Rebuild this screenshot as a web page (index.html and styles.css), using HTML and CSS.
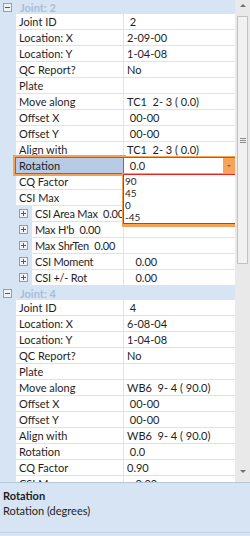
FILE: index.html
```html
<!DOCTYPE html>
<html lang="en">
<head>
  <meta charset="UTF-8">
  <title>Properties</title>
  <link rel="stylesheet" href="styles.css">
</head>
<body>

<div class="top">
  <!-- Property grid -->
  <div class="grid">

    <div class="cat"><span class="toggle minus"></span>Joint: 2</div>
    <div class="row"><div class="name">Joint ID</div><div class="val">&nbsp;2</div></div>
    <div class="row"><div class="name">Location: X</div><div class="val">2-09-00</div></div>
    <div class="row"><div class="name">Location: Y</div><div class="val">1-04-08</div></div>
    <div class="row"><div class="name">QC Report?</div><div class="val">No</div></div>
    <div class="row"><div class="name">Plate</div><div class="val"></div></div>
    <div class="row"><div class="name">Move along</div><div class="val">TC1&nbsp; 2- 3 ( 0.0)</div></div>
    <div class="row"><div class="name">Offset X</div><div class="val">&nbsp;00-00</div></div>
    <div class="row"><div class="name">Offset Y</div><div class="val">&nbsp;00-00</div></div>
    <div class="row"><div class="name">Align with</div><div class="val">TC1&nbsp; 2- 3 ( 0.0)</div></div>
    <div class="row active">
      <div class="name">Rotation</div>
      <div class="val edit">
        &nbsp;0.0
        <span class="drop-btn"></span>
        <!-- open dropdown covers the rows below -->
        <div class="drop-list">
          <div>90</div>
          <div>45</div>
          <div>0</div>
          <div>-45</div>
        </div>
      </div>
    </div>
    <div class="row"><div class="name">CQ Factor</div><div class="val"></div></div>
    <div class="row"><div class="name">CSI Max</div><div class="val"></div></div>
    <div class="row sub"><span class="toggle plus"></span><div class="name">CSI Area Max&nbsp; 0.00</div><div class="val"></div></div>
    <div class="row sub"><span class="toggle plus"></span><div class="name">Max H'b&nbsp; 0.00</div><div class="val"></div></div>
    <div class="row sub"><span class="toggle plus"></span><div class="name">Max ShrTen&nbsp; 0.00</div><div class="val"></div></div>
    <div class="row sub"><span class="toggle plus"></span><div class="name">CSI Moment</div><div class="val">&nbsp;&nbsp; 0.00</div></div>
    <div class="row sub"><span class="toggle plus"></span><div class="name">CSI +/- Rot</div><div class="val">&nbsp;&nbsp; 0.00</div></div>

    <div class="cat"><span class="toggle minus"></span>Joint: 4</div>
    <div class="row"><div class="name">Joint ID</div><div class="val">&nbsp;4</div></div>
    <div class="row"><div class="name">Location: X</div><div class="val">6-08-04</div></div>
    <div class="row"><div class="name">Location: Y</div><div class="val">1-04-08</div></div>
    <div class="row"><div class="name">QC Report?</div><div class="val">No</div></div>
    <div class="row"><div class="name">Plate</div><div class="val"></div></div>
    <div class="row"><div class="name">Move along</div><div class="val">WB6&nbsp; 9- 4 ( 90.0)</div></div>
    <div class="row"><div class="name">Offset X</div><div class="val">&nbsp;00-00</div></div>
    <div class="row"><div class="name">Offset Y</div><div class="val">&nbsp;00-00</div></div>
    <div class="row"><div class="name">Align with</div><div class="val">WB6&nbsp; 9- 4 ( 90.0)</div></div>
    <div class="row"><div class="name">Rotation</div><div class="val">&nbsp;0.0</div></div>
    <div class="row"><div class="name">CQ Factor</div><div class="val">0.90</div></div>
    <div class="row"><div class="name">CSI Max</div><div class="val">&nbsp;&nbsp; 0.00</div></div>

  </div>

  <!-- Scrollbar -->
  <div class="scrollbar">
    <span class="arrow up"></span>
    <div class="thumb"><span class="grip"></span></div>
    <span class="arrow down"></span>
  </div>
</div>

<!-- Description panel -->
<div class="desc">
  <div class="desc-title">Rotation</div>
  <div class="desc-text">Rotation (degrees)</div>
</div>

</body>
</html>
```

FILE: styles.css
```css
/* Base */
* {
  margin: 0;
  padding: 0;
  box-sizing: border-box;
  font-family: Lato, "Open Sans", sans-serif;
}

body {
  width: 250px;
  height: 536px;
  overflow: hidden;
  display: flex;
  flex-direction: column;
  background: #d6e4f3;
  font-size: 11px;
  color: #1e1e1e;
}

.top {
  display: flex;
  height: 482px;
}

/* Property grid */
.grid {
  flex: 1;
  overflow: hidden;
  background: #d6e4f3;
}

.cat {
  height: 14px;
  display: flex;
  align-items: center;
  padding-left: 3px;
  font-weight: bold;
  color: #a9bed7;
}

.cat .toggle {
  margin-right: 8px;
}

.toggle {
  position: relative;
  width: 9px;
  height: 9px;
  border: 1px solid #8f9fb3;
  background: #eef3f9;
  flex-shrink: 0;
}

.toggle::before {
  content: "";
  position: absolute;
  left: 1px;
  top: 3px;
  width: 5px;
  height: 1px;
  background: #4a5a70;
}

.toggle.plus::after {
  content: "";
  position: absolute;
  left: 3px;
  top: 1px;
  width: 1px;
  height: 5px;
  background: #4a5a70;
}

.row {
  display: flex;
  height: 16px;
  padding-bottom: 1px;
}

.name {
  width: 107px;
  margin-left: 16px;
  padding-left: 3px;
  background: #fff;
  line-height: 15px;
  white-space: nowrap;
  overflow: hidden;
}

.val {
  flex: 1;
  margin-left: 1px;
  padding-left: 3px;
  background: #fff;
  line-height: 15px;
  white-space: nowrap;
  position: relative;
}

.sub {
  padding-left: 19px;
}

.sub .toggle {
  margin-top: 3px;
}

.sub .name {
  margin-left: 4px;
  width: 91px;
  letter-spacing: -0.2px;
}

/* Selected row */
.active {
  position: relative;
  z-index: 2;
}

.active .name {
  background: #b7cae6;
  box-shadow: 0 0 0 1px #e8402c, 0 0 0 3px #f7a252;
  overflow: visible;
}

.edit {
  box-shadow: 0 0 0 1px #e8402c, 1px 0 0 2px #f7a252;
}

.drop-btn {
  position: absolute;
  right: 0;
  top: 0;
  width: 12px;
  height: 15px;
  background: #f6a45a;
}

.drop-btn::after {
  content: "";
  position: absolute;
  left: 4px;
  top: 7px;
  border-left: 2px solid transparent;
  border-right: 2px solid transparent;
  border-top: 2px solid #5a6b85;
}

.drop-list {
  position: absolute;
  left: -1px;
  right: -1px;
  top: 16px;
  height: 50px;
  background: #fff;
  border: 1px solid #e8281e;
  box-shadow: 1px 1px 0 2px #f7a252;
  padding: 0 1px;
  font-size: 10px;
  line-height: 12px;
}

/* Scrollbar */
.scrollbar {
  width: 15px;
  display: flex;
  flex-direction: column;
  align-items: center;
  background: #e9e9e9;
}

.arrow {
  width: 0;
  height: 0;
  border-left: 3px solid transparent;
  border-right: 3px solid transparent;
}

.arrow.up {
  margin: 4px 0 9px;
  border-bottom: 3px solid #707070;
}

.arrow.down {
  margin-top: 206px;
  border-top: 3px solid #707070;
}

.thumb {
  width: 11px;
  height: 248px;
  background: #f1f1f1;
  border: 1px solid #c2c2c2;
  display: flex;
  align-items: center;
  justify-content: center;
}

.grip {
  width: 6px;
  height: 5px;
  border-top: 1px solid #8a8a8a;
  border-bottom: 1px solid #8a8a8a;
  background: linear-gradient(#8a8a8a, #8a8a8a) center / 100% 1px no-repeat;
}

/* Description panel */
.desc {
  flex: 1;
  margin-bottom: 3px;
  border-top: 1px solid #b4c6dc;
  border-bottom: 1px solid #c3d3e6;
  padding: 5px 3px;
  line-height: 15px;
}

.desc-title {
  font-weight: bold;
}
```
